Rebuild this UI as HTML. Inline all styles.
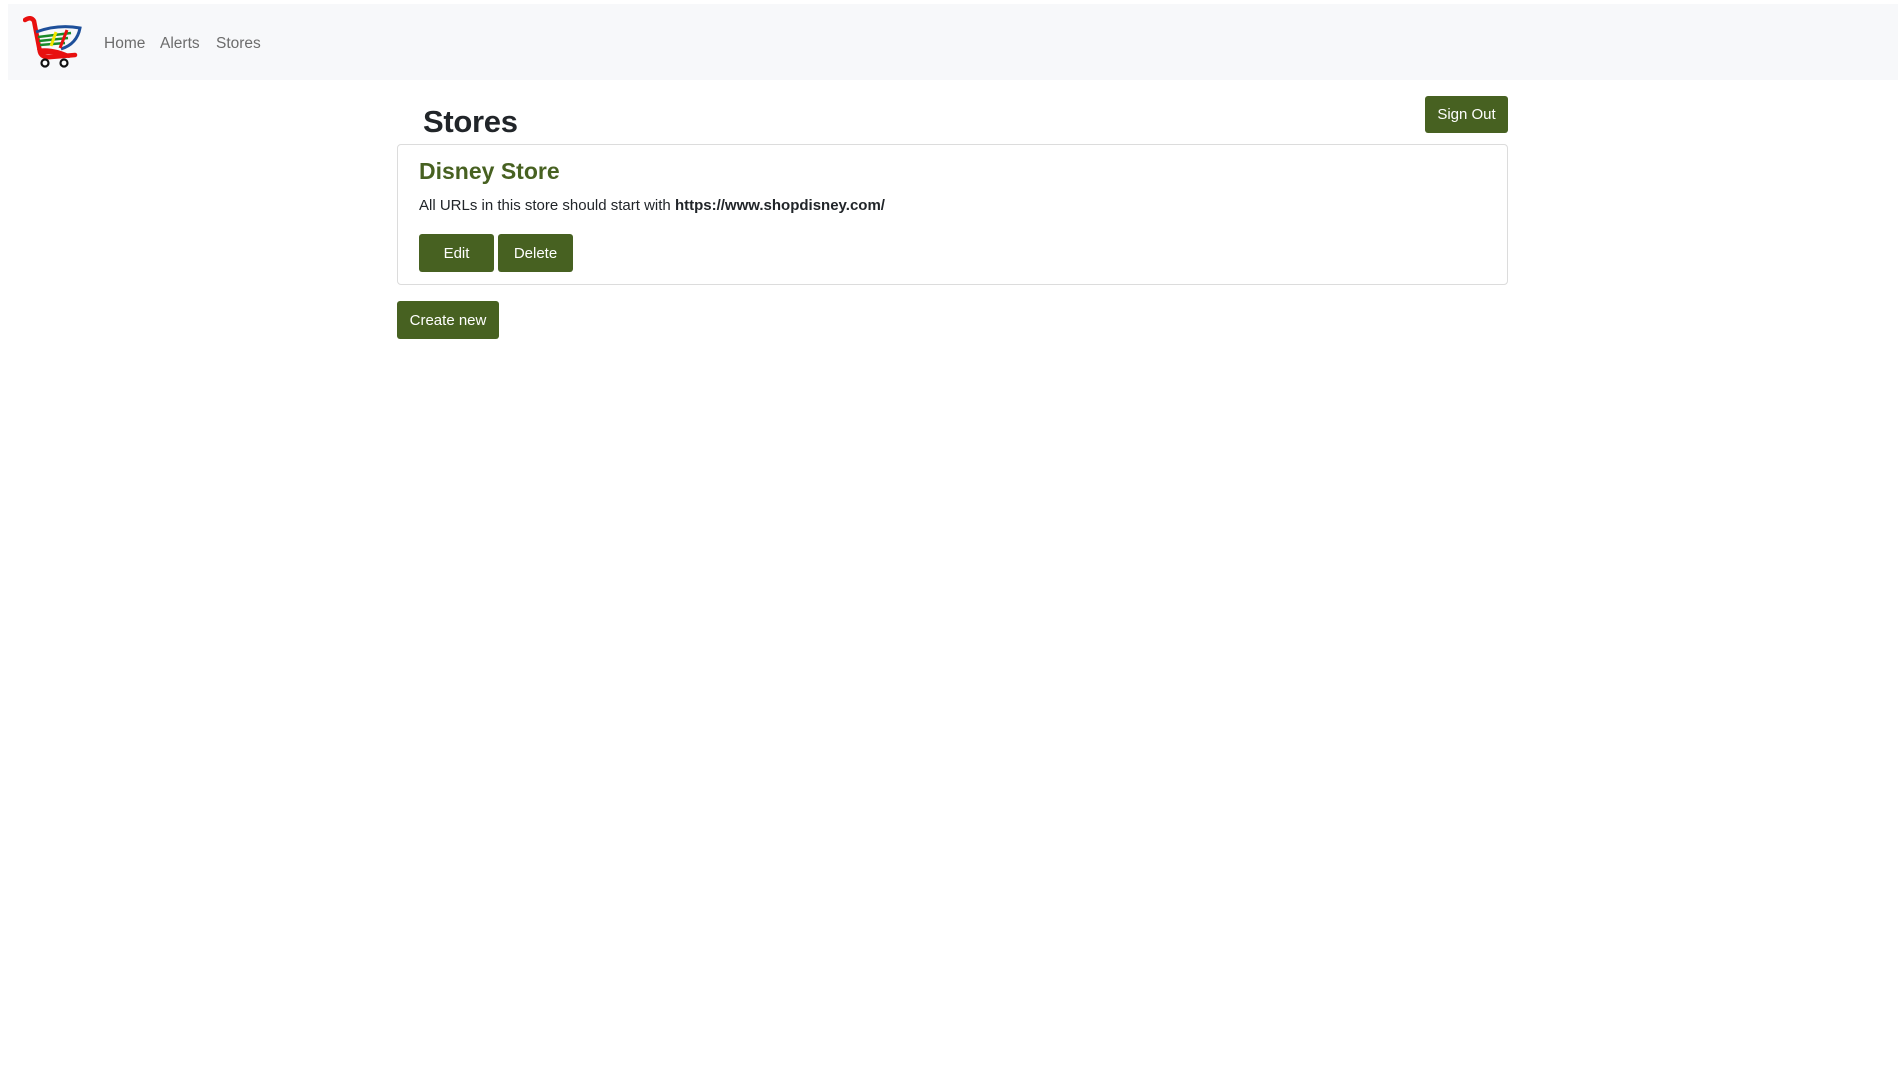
<!DOCTYPE html>
<html><head><meta charset="utf-8"><style>
body{margin:0;background:#fff;font-family:"Liberation Sans",sans-serif;color:#212529;width:1903px;height:1068px;overflow:hidden;position:relative}
.nav{position:absolute;left:8px;top:4px;width:1890px;height:76px;background:#f7f8fa}
.nav a{position:absolute;top:31px;font-size:15.5px;color:#6c6c6c;text-decoration:none}
.btn{position:absolute;background:#476121;color:#fff;border-radius:3px;font-size:15px;display:flex;align-items:center;justify-content:center}
.abs{position:absolute;white-space:nowrap}
</style></head><body>
<div class="nav">
<svg style="position:absolute;left:15px;top:12px" width="60" height="56" viewBox="0 0 60 56">
<path d="M2 4 Q8 0 11 5 L17 36 Q19 42 28 41 L52 39" stroke="#e8100f" stroke-width="4.5" fill="none" stroke-linecap="round"/>
<path d="M14 33 Q30 30 50 40 L46 42 Q30 37 16 39Z" fill="#e8100f"/>
<path d="M13 16 Q35 8 57 12 Q54 28 38 33" stroke="#1d4f9a" stroke-width="3" fill="none"/>
<path d="M15 21 L48 17 M16 25 L45 22 M17 29 L42 27" stroke="#1a8a2a" stroke-width="2.5"/>
<path d="M33 16 L28 30" stroke="#f2e600" stroke-width="3"/>
<path d="M44 14 L37 32" stroke="#e8100f" stroke-width="3"/>
<circle cx="22" cy="47" r="3.5" fill="#fff" stroke="#111" stroke-width="2.2"/>
<circle cx="41" cy="47" r="3.5" fill="#fff" stroke="#111" stroke-width="2.2"/>
</svg>
<a style="left:96px">Home</a>
<a style="left:152px">Alerts</a>
<a style="left:208px">Stores</a>
</div>
<div class="abs" style="left:423px;top:104px;font-size:31px;font-weight:bold;letter-spacing:-0.3px">Stores</div>
<div class="btn" style="left:1425px;top:96px;width:83px;height:37px">Sign Out</div>
<div style="position:absolute;left:397px;top:144px;width:1109px;height:139px;border:1px solid #dcdcdc;border-radius:4px"></div>
<div class="abs" style="left:419px;top:158px;font-size:23px;font-weight:bold;color:#476121">Disney Store</div>
<div class="abs" style="left:419px;top:197px;font-size:15px">All URLs in this store should start with <b>https://www.shopdisney.com/</b></div>
<div class="btn" style="left:419px;top:234px;width:75px;height:38px">Edit</div>
<div class="btn" style="left:498px;top:234px;width:75px;height:38px">Delete</div>
<div class="btn" style="left:397px;top:301px;width:102px;height:38px">Create new</div>
</body></html>
